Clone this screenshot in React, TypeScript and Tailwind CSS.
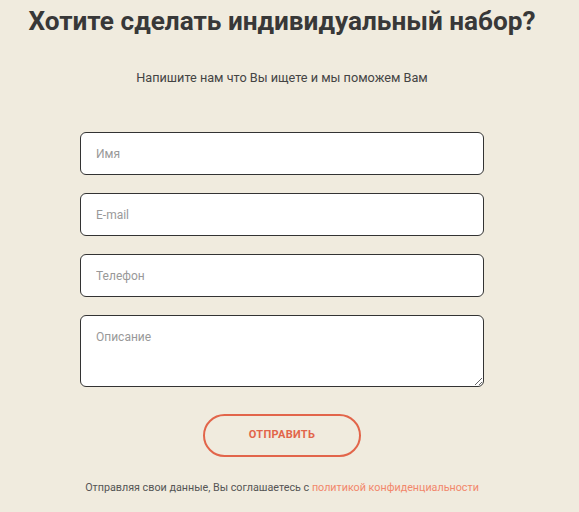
import React from "react";

export default function App() {
  return (
    <div
      className="min-h-screen w-full bg-[#f0ebde] text-[#3a3a3a]"
      style={{ fontFamily: 'Roboto, "Noto Sans", "Liberation Sans", sans-serif' }}
    >
      <div className="w-[564px] flex flex-col items-center">
        <h2 className="text-[26.2px] font-bold leading-[32px] mt-[5px] text-[#383838]">
          Хотите сделать индивидуальный набор?
        </h2>
        <p className="mt-[32px] text-[12.7px] leading-[18px] text-[#444]">
          Напишите нам что Вы ищете и мы поможем Вам
        </p>
        <form className="mt-[45px] w-[404px] flex flex-col gap-[18px]" onSubmit={(e) => e.preventDefault()}>
          <input
            type="text"
            placeholder="Имя"
            className="h-[43px] w-full rounded-[6px] border border-[#333] bg-white px-[15px] text-[12px] placeholder:text-[#999] outline-none"
          />
          <input
            type="text"
            placeholder="E-mail"
            className="h-[43px] w-full rounded-[6px] border border-[#333] bg-white px-[15px] text-[12px] placeholder:text-[#999] outline-none"
          />
          <input
            type="text"
            placeholder="Телефон"
            className="h-[43px] w-full rounded-[6px] border border-[#333] bg-white px-[15px] text-[12px] placeholder:text-[#999] outline-none"
          />
          <textarea
            placeholder="Описание"
            className="h-[72px] w-full rounded-[6px] border border-[#333] bg-white px-[15px] pt-[12px] text-[12px] placeholder:text-[#999] outline-none"
          />
          <div className="flex justify-center mt-[9px]">
            <button
              type="submit"
              className="h-[43px] w-[158px] rounded-full border-2 border-[#e2654a] text-[#e2654a] text-[11px] font-bold tracking-[0.3px]"
            >
              ОТПРАВИТЬ
            </button>
          </div>
        </form>
        <p className="mt-[23px] text-[10.75px] leading-[16px] text-[#555]">
          Отправляя свои данные, Вы соглашаетесь с{" "}
          <a href="#" className="text-[#f2876b]">политикой конфиденциальности</a>
        </p>
      </div>
    </div>
  );
}
